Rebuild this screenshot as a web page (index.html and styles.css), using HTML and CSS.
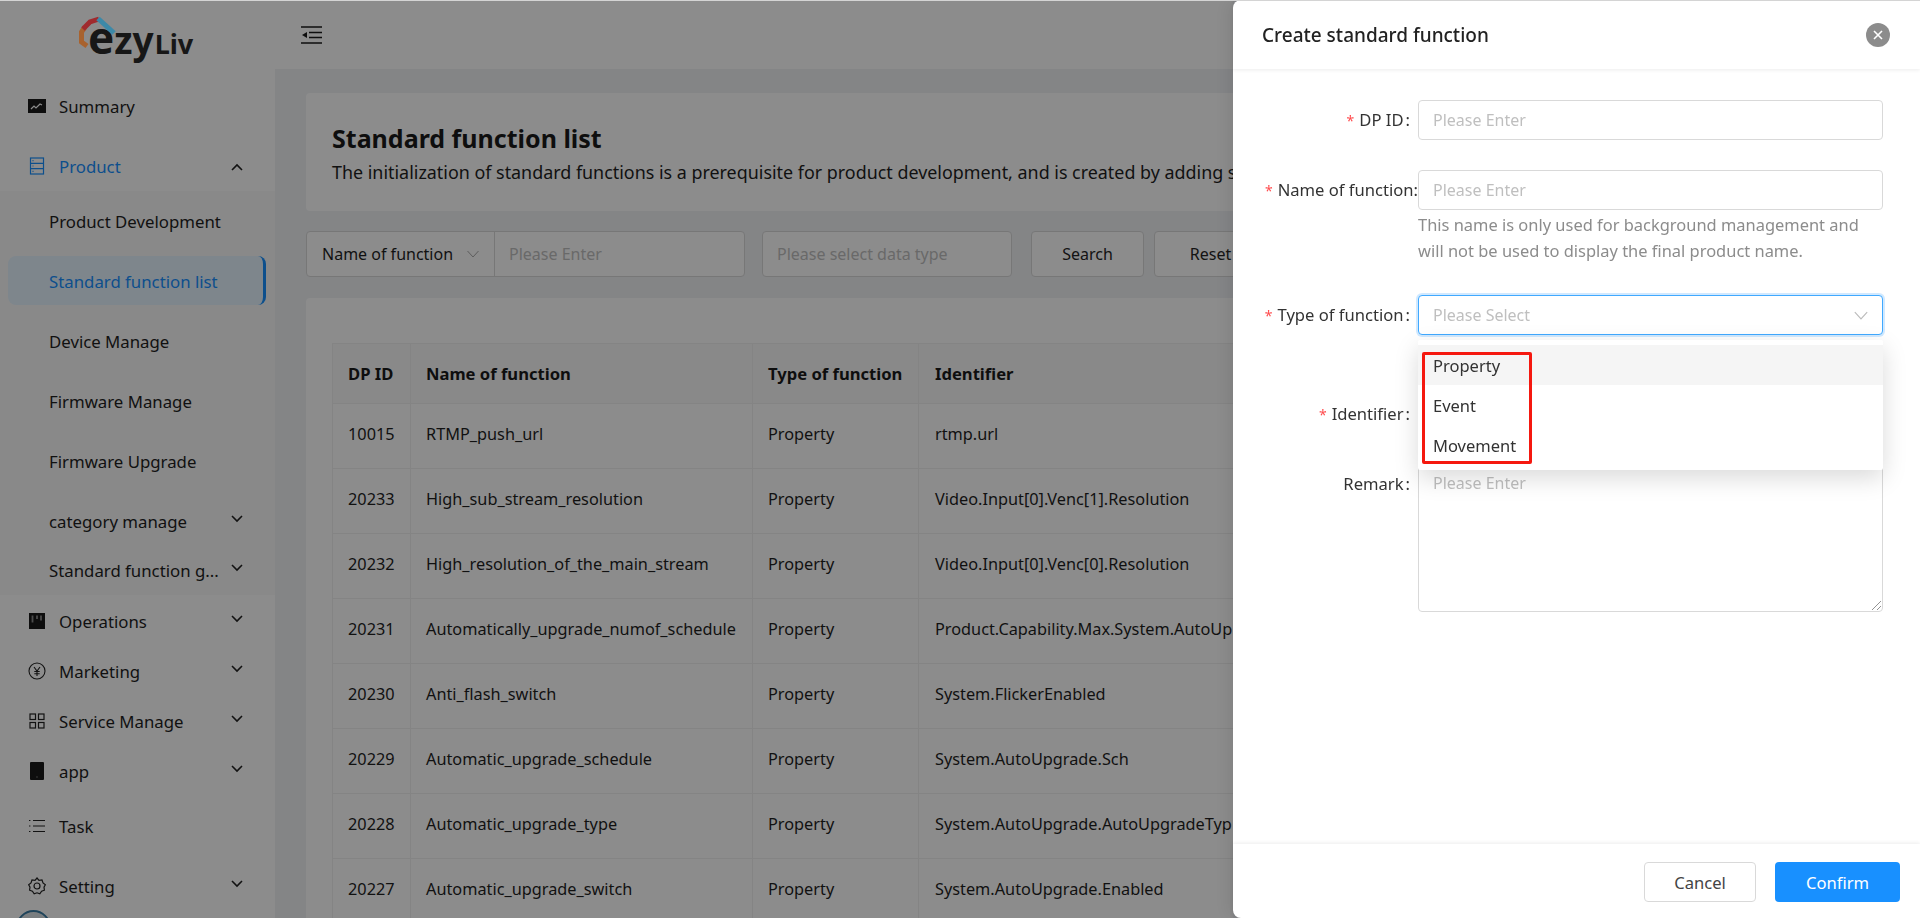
FILE: index.html

```html
<!DOCTYPE html>
<html lang="en">
<head>
  <meta charset="UTF-8">
  <title>Standard function list</title>
  <link rel="stylesheet" href="styles.css">
</head>
<body>

<div class="app">
  <aside class="sidebar">
    <div class="logo">
      <svg width="40" height="36" viewBox="0 0 40 36" fill="none" stroke-width="5">
        <path d="M7 12L3.500 17V27L9 31" stroke="#a8622e"/>
        <path d="M5 14L12 7L21 4" stroke="#a02a2e"/>
        <path d="M20 3.500L36 18" stroke="#3c89a8"/>
      </svg>
      <span class="logo-e">e</span><span class="logo-zy">zy</span><span class="logo-liv">Liv</span>
    </div>
    <nav class="menu">
      <div class="menu-item">
        <svg class="menu-icon" viewBox="0 0 18 18"><path d="M0 2h18v14H0z" fill="#1b1b1b"/><path d="M3 12l3-3 2 2 4-4 2 1" fill="none" stroke="#fff" stroke-width="1.2"/></svg>
        <span>Summary</span>
      </div>
      <div class="menu-item menu-open">
        <svg class="menu-icon" viewBox="0 0 18 18" fill="none" stroke="#1890ff" stroke-width="1.2"><rect x="2.500" y="1" width="13" height="16"/><path d="M2.500 6.300h13M2.500 11.600h13M4.500 3.600h1M4.500 9h1M4.500 14.300h1"/></svg>
        <span>Product</span>
        <svg class="caret caret-up" viewBox="0 0 12 8"><path d="M1 7l5-5 5 5" fill="none" stroke="#222" stroke-width="1.6"/></svg>
      </div>
      <div class="submenu">
        <div class="sub-item">Product Development</div>
        <div class="sub-item sub-active">Standard function list</div>
        <div class="sub-item">Device Manage</div>
        <div class="sub-item">Firmware Manage</div>
        <div class="sub-item">Firmware Upgrade</div>
        <div class="sub-item">category manage
          <svg class="caret" viewBox="0 0 12 8"><path d="M1 1l5 5 5-5" fill="none" stroke="#222" stroke-width="1.6"/></svg>
        </div>
        <div class="sub-item sub-short">Standard function g...
          <svg class="caret" viewBox="0 0 12 8"><path d="M1 1l5 5 5-5" fill="none" stroke="#222" stroke-width="1.6"/></svg>
        </div>
      </div>
      <div class="menu-item menu-short">
        <svg class="menu-icon" viewBox="0 0 18 18"><path d="M1 1h16v16H1z" fill="#1b1b1b"/><path d="M4.500 3.500v7M9 3.500v3.500M13 3.500v5" stroke="#8c8c8c" stroke-width="1.8"/></svg>
        <span>Operations</span>
        <svg class="caret" viewBox="0 0 12 8"><path d="M1 1l5 5 5-5" fill="none" stroke="#222" stroke-width="1.6"/></svg>
      </div>
      <div class="menu-item menu-short">
        <svg class="menu-icon" viewBox="0 0 18 18" fill="none" stroke="#222" stroke-width="1.1"><circle cx="9" cy="9" r="8"/><path d="M6 5l3 4 3-4M9 9v5M6.300 9.500h5.400M6.300 11.700h5.400"/></svg>
        <span>Marketing</span>
        <svg class="caret" viewBox="0 0 12 8"><path d="M1 1l5 5 5-5" fill="none" stroke="#222" stroke-width="1.6"/></svg>
      </div>
      <div class="menu-item menu-short">
        <svg class="menu-icon" viewBox="0 0 18 18" fill="none" stroke="#222" stroke-width="1.2"><rect x="2" y="2" width="5.500" height="5.500"/><rect x="10.500" y="2" width="5.500" height="5.500"/><rect x="2" y="10.500" width="5.500" height="5.500"/><rect x="10.500" y="10.500" width="5.500" height="5.500"/></svg>
        <span>Service Manage</span>
        <svg class="caret" viewBox="0 0 12 8"><path d="M1 1l5 5 5-5" fill="none" stroke="#222" stroke-width="1.6"/></svg>
      </div>
      <div class="menu-item menu-short">
        <svg class="menu-icon" viewBox="0 0 18 18"><rect x="2" y="0" width="14" height="18" rx="1" fill="#1b1b1b"/><path d="M8.300 15h1.400" stroke="#8c8c8c"/></svg>
        <span>app</span>
        <svg class="caret" viewBox="0 0 12 8"><path d="M1 1l5 5 5-5" fill="none" stroke="#222" stroke-width="1.6"/></svg>
      </div>
      <div class="menu-item">
        <svg class="menu-icon" viewBox="0 0 18 18" fill="none" stroke="#222" stroke-width="1.2"><path d="M5 3.500h12M5 9h12M5 14.500h12M1 3.500h1.400M1 9h1.400M1 14.500h1.400"/></svg>
        <span>Task</span>
      </div>
      <div class="menu-item">
        <svg class="menu-icon" viewBox="0 0 18 18" fill="none" stroke="#222" stroke-width="1.2"><path d="M9 1l2 2.400 3-.4 1 2.900 2.400 1.800L16 10.200l.4 3-2.800 1-1.800 2.600L9 15.800l-2.800 1-1.800-2.600-2.800-1 .4-3L.6 7.700 3 5.900 4 3l3 .4z"/><circle cx="9" cy="9" r="3"/></svg>
        <span>Setting</span>
        <svg class="caret" viewBox="0 0 12 8"><path d="M1 1l5 5 5-5" fill="none" stroke="#222" stroke-width="1.6"/></svg>
      </div>
    </nav>
    <div class="avatar"></div>
  </aside>

  <div class="page">
    <div class="topbar">
      <svg width="21" height="18" viewBox="0 0 21 18" fill="none" stroke="#1b1b1b" stroke-width="1.500"><path d="M0 1h21M8 6.500h13M8 11.500h13M0 17h21"/><path d="M6 6v6L1 9z" fill="#1b1b1b" stroke="none"/></svg>
    </div>
    <main class="content">
      <section class="intro">
        <h1>Standard function list</h1>
        <p>The initialization of standard functions is a prerequisite for product development, and is created by adding s</p>
      </section>
      <div class="filters">
        <div class="field field-name">
          <div class="field-select">Name of function
            <svg class="chev" viewBox="0 0 12 8"><path d="M.5 1l5.500 6 5.500-6" fill="none" stroke="#aaa"/></svg>
          </div>
          <div class="field-input">Please Enter</div>
        </div>
        <div class="field field-type"><div class="field-input">Please select data type</div></div>
        <button class="btn btn-search">Search</button>
        <button class="btn btn-search">Reset</button>
      </div>
      <section class="list">
        <table>
          <thead>
            <tr><th class="c-id">DP ID</th><th class="c-name">Name of function</th><th class="c-type">Type of function</th><th>Identifier</th></tr>
          </thead>
          <tbody>
            <tr><td>10015</td><td>RTMP_push_url</td><td>Property</td><td>rtmp.url</td></tr>
            <tr><td>20233</td><td>High_sub_stream_resolution</td><td>Property</td><td>Video.Input[0].Venc[1].Resolution</td></tr>
            <tr><td>20232</td><td>High_resolution_of_the_main_stream</td><td>Property</td><td>Video.Input[0].Venc[0].Resolution</td></tr>
            <tr><td>20231</td><td>Automatically_upgrade_numof_schedule</td><td>Property</td><td>Product.Capability.Max.System.AutoUp</td></tr>
            <tr><td>20230</td><td>Anti_flash_switch</td><td>Property</td><td>System.FlickerEnabled</td></tr>
            <tr><td>20229</td><td>Automatic_upgrade_schedule</td><td>Property</td><td>System.AutoUpgrade.Sch</td></tr>
            <tr><td>20228</td><td>Automatic_upgrade_type</td><td>Property</td><td>System.AutoUpgrade.AutoUpgradeTyp</td></tr>
            <tr><td>20227</td><td>Automatic_upgrade_switch</td><td>Property</td><td>System.AutoUpgrade.Enabled</td></tr>
          </tbody>
        </table>
      </section>
    </main>
  </div>
</div>

<div class="mask"></div>

<aside class="drawer">
  <header class="drawer-head">
    <span>Create standard function</span>
    <span class="close"><svg width="10" height="10" viewBox="0 0 10 10"><path d="M1 1l8 8M9 1l-8 8" stroke="#fff" stroke-width="1.600"/></svg></span>
  </header>
  <form class="drawer-body">
    <div class="row row-id">
      <label class="req">DP ID</label>
      <div class="control"><div class="input ph">Please Enter</div></div>
    </div>
    <div class="row row-name">
      <label class="req label-tight">Name of function</label>
      <div class="control">
        <div class="input ph">Please Enter</div>
        <p class="hint">This name is only used for background management and will not be used to display the final product name.</p>
      </div>
    </div>
    <div class="row row-type">
      <label class="req">Type of function</label>
      <div class="control">
        <div class="input input-focus ph">Please Select
          <svg class="chev chev-big" viewBox="0 0 12 8"><path d="M.5 1l5.500 6 5.500-6" fill="none" stroke="#bbb"/></svg>
        </div>
      </div>
    </div>
    <div class="row row-identifier">
      <label class="req">Identifier</label>
      <div class="control"><div class="input ph"></div></div>
    </div>
    <div class="row">
      <label>Remark</label>
      <div class="control">
        <div class="textarea ph">Please Enter
          <svg class="grip" width="9" height="9" viewBox="0 0 9 9"><path d="M0 9l9-9M5 9l4-4" stroke="#777" stroke-width=".8"/></svg>
        </div>
      </div>
    </div>
    <div class="dropdown">
      <div class="option option-hover">Property</div>
      <div class="option">Event</div>
      <div class="option">Movement</div>
      <div class="mark"></div>
    </div>
  </form>
  <footer class="drawer-foot">
    <button type="button" class="btn-cancel">Cancel</button>
    <button type="button" class="btn-ok">Confirm</button>
  </footer>
</aside>

<div class="topline"></div>

</body>
</html>
```

FILE: styles.css

```css
html, body { margin: 0; padding: 0; height: 100%; overflow: hidden; }
body { font-family: "Noto Sans", "Open Sans", sans-serif; font-size: 16px; color: #1f1f1f; background: #f0f2f5; }
* { box-sizing: border-box; }

.app { display: flex; height: 918px; overflow: hidden; }
.topline { position: fixed; top: 0; left: 0; right: 0; height: 1px; background: #d4d4d4; z-index: 4; }

.sidebar { width: 275px; flex: none; background: #fff; position: relative; overflow: hidden; }
.logo { height: 77px; padding: 15px 0 0 88px; display: flex; align-items: baseline; font-weight: 700; color: #2b2b2b; line-height: 1; }
.logo svg { position: absolute; left: 78px; top: 15px; z-index: 2; }
.logo-e { font-size: 44px; }
.logo-zy { font-size: 37px; }
.logo-liv { font-size: 27px; margin-left: 1px; }

.menu-item { height: 60px; padding: 0 28px 2px; display: flex; align-items: center; gap: 13px; font-size: 16.800px; }
.menu-short { height: 50px; }
.menu-open { color: #1890ff; height: 48px; margin-top: 6px; }
.menu-icon { width: 18px; height: 18px; flex: none; }
.caret { width: 12px; height: 8px; position: absolute; left: 231px; margin-top: -4px; }
.caret-up { margin-top: 2px; }

.submenu { background: #fafafa; padding: 1px 0 5px; margin-bottom: 2px; }
.sub-item { height: 60px; padding: 0 0 2px 49px; display: flex; align-items: center; font-size: 16.800px; }
.sub-short { height: 38px; }
.sub-active { margin: 4px 9px 7px 8px; padding: 2px 0 0 41px; height: 49px; background: #e6f4ff; color: #1890ff; border-right: 3px solid #1890ff; border-radius: 8px; }

.avatar { position: absolute; left: 16px; top: 910px; width: 35px; height: 35px; border-radius: 50%; background: radial-gradient(circle at 50% 40%, #e0703c 0 5px, #dfe6ea 6px); border: 2px solid #3a7ca5; }

.page { width: 958px; flex: none; overflow: hidden; }
.topbar { height: 69px; background: #fff; padding: 26px 0 0 26px; }
.content { padding: 24px 31px; width: 1645px; }

.intro { background: #fff; border-radius: 4px; height: 118px; padding: 27px 26px; }
.intro h1 { margin: 0; font-size: 25px; font-weight: 700; line-height: 36px; color: #1b1b1b; }
.intro p { margin: 4px 0 0; font-size: 17.900px; line-height: 24px; white-space: nowrap; }

.filters { display: flex; margin-top: 20px; height: 46px; gap: 19px; }
.field { display: flex; border: 1px solid #d9d9d9; background: #fff; border-radius: 4px; align-items: center; font-size: 16px; }
.field-name { width: 439px; }
.field-type { width: 250px; margin-left: -2px; }
.field-select { width: 188px; height: 100%; padding-left: 15px; border-right: 1px solid #d9d9d9; display: flex; align-items: center; gap: 14px; }
.field-input { color: #bfbfbf; padding-left: 14px; }
.chev { width: 12px; height: 8px; }
.btn { width: 113px; height: 46px; background: #fff; border: 1px solid #d9d9d9; border-radius: 4px; font: inherit; font-size: 16px; color: #262626; margin-right: -9px; }

.list { background: #fff; border-radius: 4px; margin-top: 21px; padding: 45px 26px; }
table { border-collapse: collapse; width: 1400px; table-layout: fixed; font-size: 16.300px; }
th, td { border: 1px solid #f0f0f0; padding: 0 15px; text-align: left; height: 65px; white-space: nowrap; overflow: hidden; }
td { padding-bottom: 4px; }
th { background: #fafafa; font-weight: 700; font-size: 16.600px; height: 60px; color: #1b1b1b; }
th:last-child, td:last-child { padding-left: 16px; }
.c-id { width: 78px; }
.c-name { width: 342px; }
.c-type { width: 166px; }

.mask { position: fixed; inset: 0; background: rgba(0, 0, 0, .45); z-index: 1; }

.drawer { position: fixed; top: 0; right: 0; width: 687px; height: 918px; z-index: 3; background: #fff; display: flex; flex-direction: column; border-radius: 8px 0 0 8px; box-shadow: -6px 0 16px rgba(0, 0, 0, .08); }
.drawer-head { height: 69px; flex: none; padding: 1px 30px 0 29px; display: flex; align-items: center; justify-content: space-between; font-size: 19px; font-weight: 500; color: #222; box-shadow: 0 1px 4px rgba(0, 0, 0, .08); }
.close { width: 24px; height: 24px; border-radius: 50%; background: #8c8c8c; display: flex; align-items: center; justify-content: center; }
.drawer-body { flex: 1; position: relative; padding: 31px 37px 0 0; }
.drawer-foot { height: 74px; flex: none; padding: 2px 20px 0; display: flex; align-items: center; justify-content: flex-end; gap: 19px; box-shadow: 0 -1px 4px rgba(0, 0, 0, .08); }

.row { display: flex; margin-bottom: 30px; font-size: 16px; }
.row > label { width: 185px; flex: none; text-align: right; padding-top: 8px; line-height: 24px; white-space: nowrap; font-size: 16.600px; color: #333; }
.row > label::after { content: ":"; margin: 0 8px 0 2px; }
.row > .label-tight::after { margin: 0; }
.req::before { content: "*"; color: #ff4d4f; margin-right: 5px; font-size: 14px; }
.control { flex: 1; min-width: 0; }
.input { height: 40px; border: 1px solid #d9d9d9; border-radius: 4px; padding: 0 14px; display: flex; align-items: center; justify-content: space-between; background: #fff; }
.input-focus { border-color: #40a9ff; box-shadow: 0 0 0 2px rgba(24, 144, 255, .2); }
.ph { color: #bfbfbf; }
.chev-big { width: 14px; height: 9px; }
.hint { margin: 0; color: #8c8c8c; font-size: 16.450px; line-height: 26px; padding: 2px 16px 0 0; }
.row-name { margin-bottom: 31px; }
.row-type { margin-bottom: 59px; }
.textarea { height: 148px; border: 1px solid #d9d9d9; border-radius: 4px; padding: 7px 14px; position: relative; }
.grip { position: absolute; right: 1px; bottom: 1px; }

.dropdown { position: absolute; left: 185px; top: 271px; width: 465px; height: 130px; padding: 5px 0; background: #fff; border-radius: 2px; box-shadow: 0 8px 24px rgba(0, 0, 0, .15); }
.option { height: 40px; padding: 0 15px; display: flex; align-items: center; color: #333; font-size: 16.500px; }
.option-hover { background: #f5f5f5; }
.mark { position: absolute; left: 4px; top: 12px; width: 110px; height: 112px; border: 3px solid #f5180f; border-radius: 2px; }

.btn-cancel, .btn-ok { height: 40px; border-radius: 4px; font: inherit; font-size: 16.600px; }
.btn-cancel { width: 112px; background: #fff; border: 1px solid #d9d9d9; color: #444; }
.btn-ok { width: 125px; background: #1890ff; border: 0; color: #fff; }
```
